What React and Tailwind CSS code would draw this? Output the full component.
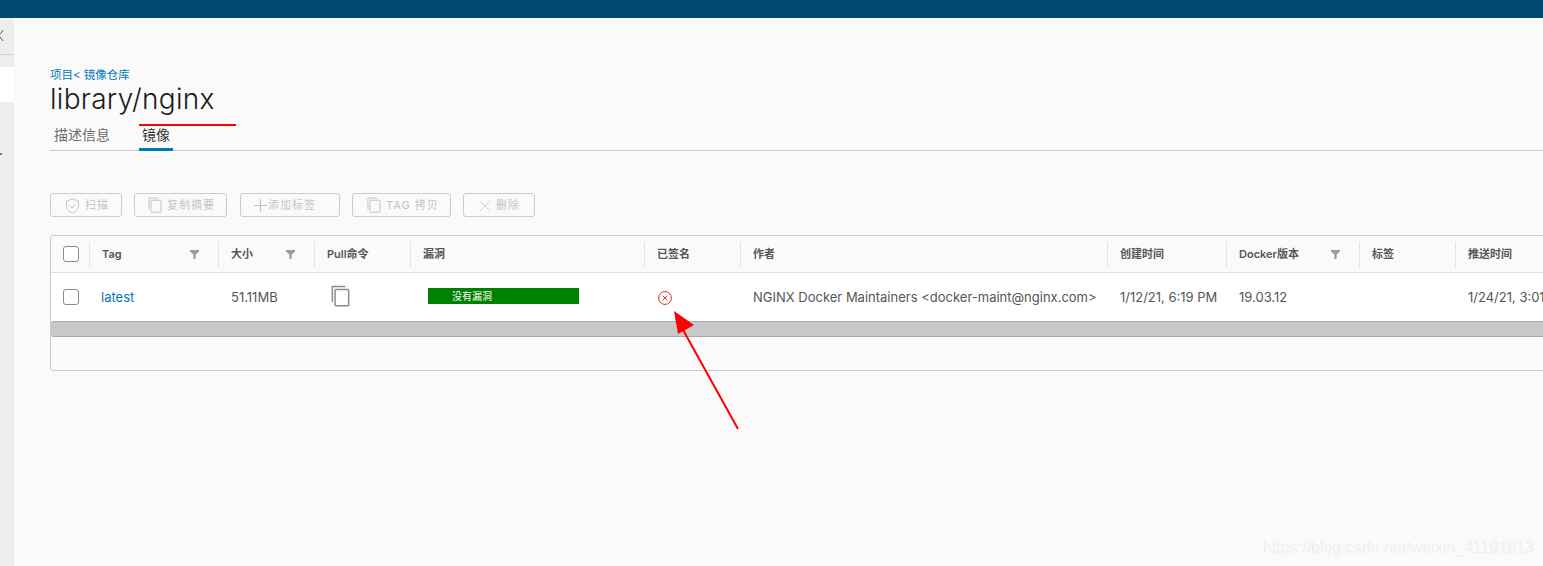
import React from 'react';
import { X } from 'lucide-react';

const FONT = "font-['Inter','Noto_Sans_CJK_SC',sans-serif]";

// shared column widths for the header and the row
const gridCols = 'grid grid-cols-[38px_129px_96px_96px_234px_96px_367px_119px_133px_96px_200px]';

const ShieldIcon = () => (
  <svg width="15" height="16" viewBox="0 0 15 16" fill="none" stroke="#c4c4c4" strokeWidth="1">
    <path d="M7.5 1 13.5 3.2v5c0 3.4-2.6 5.6-6 6.8-3.4-1.2-6-3.4-6-6.8v-5z" />
    <path d="M4.8 7.8 7 10l3.4-4" />
  </svg>
);

const CopyIcon = ({ size = 14, color = '#c4c4c4', stroke = 1 }) => (
  <svg width={size} height={size * 1.15} viewBox="0 0 14 16" fill="none" stroke={color} strokeWidth={stroke}>
    <path d="M10.5 1H1v11.5" />
    <rect x="3" y="3.2" width="10" height="12" rx="0.6" />
  </svg>
);

const PlusIcon = () => (
  <svg width="13" height="13" viewBox="0 0 13 13" stroke="#c4c4c4" strokeWidth="1.2">
    <path d="M6.5 0v13M0 6.5h13" />
  </svg>
);

const FilterIcon = () => (
  <svg width="9" height="9" viewBox="0 0 9 9" fill="#9a9a9a">
    <path d="M0 0h9v1.4L5.6 4.6V9H3.4V4.6L0 1.4z" />
  </svg>
);

const Checkbox = () => (
  <span className="block w-4 h-4 rounded-[3px] border border-[#8c8c8c] bg-white" />
);

const ActionButton = ({ icon, label, className }) => (
  <button className={`h-6 pt-px flex items-center rounded-[3px] border border-[#cccccc] text-[11px] tracking-[1px] text-[#c4c4c4] ${className}`}>
    {icon}
    <span>{label}</span>
  </button>
);

const HeaderCell = ({ label, filter }) => (
  <div className="h-[25px] my-auto pt-px flex items-center justify-between border-l border-[#e3e3e3] pl-3 pr-[19px]">
    <span className="text-[11px] font-semibold text-[#565656]">{label}</span>
    {filter && <FilterIcon />}
  </div>
);

const BodyCell = ({ children, className = 'pl-[13px] text-[#565656]' }) => (
  <div className={`pt-px flex items-center text-[13px] whitespace-nowrap ${className}`}>{children}</div>
);

const App = () => {
  return (
    <div className={`relative w-[1543px] h-[566px] overflow-hidden bg-[#fafafa] flex flex-col ${FONT}`}>
      <header className="h-[18px] shrink-0 bg-[#004a70]" />

      <div className="flex flex-1 min-h-0">
        {/* collapsed side nav, its labels are cut off by the narrow width */}
        <aside className="w-[14px] shrink-0 bg-[#ededed] flex flex-col overflow-hidden">
          <div className="h-[37px] border-b border-[#cfcfcf]">
            <svg className="mt-[11px]" width="4" height="13" viewBox="0 0 4 13" fill="none" stroke="#555" strokeWidth="1">
              <path d="M0 5 2 3M3 1 2 3M0 8l3 4" />
            </svg>
          </div>
          <div className="mt-3 h-[35px] bg-white" />
          <div className="mt-[51px] w-[2px] h-[2px] bg-[#777]" />
        </aside>

        <main className="flex-1 min-w-0 pl-9 pt-[51px]">
          <div className="text-[11.5px] leading-3 text-[#0079b8]">项目&lt; 镜像仓库</div>
          <h1 className="mt-[3px] text-[28px] leading-[30px] font-light tracking-[0.3px] text-[#1a1a1a]">library/nginx</h1>

          <nav className="mt-[6px] h-[31px] border-b border-[#cccccc] flex text-[14px]">
            <span className="pl-1 pt-[6px] leading-[18px] w-[89px] text-[#6b6b6b]">描述信息</span>
            <span className="w-[34px] h-[31px] pt-[6px] text-center leading-[18px] text-[#333] border-b-[3px] border-[#0079b8]">镜像</span>
          </nav>

          <div className="mt-[42px] flex gap-3">
            <ActionButton className="w-[72px] pl-[14px] gap-[5px]" icon={<ShieldIcon />} label="扫描" />
            <ActionButton className="w-[93px] pl-[13px] gap-[5px]" icon={<CopyIcon />} label="复制摘要" />
            <ActionButton className="w-[100px] ml-px pl-[13px] gap-[1px]" icon={<PlusIcon />} label="添加标签" />
            <ActionButton className="w-[99px] pl-[14px] gap-[5px]" icon={<CopyIcon />} label="TAG 拷贝" />
            <ActionButton className="w-[72px] pl-[11px] gap-[1px]" icon={<X size={20} strokeWidth={0.8} color="#c4c4c4" />} label="删除" />
          </div>

          {/* image table runs past the right edge of the window */}
          <section className="mt-[18px] w-[1700px] h-[136px] rounded-[3px] border border-[#cccccc]">
            <div className={`${gridCols} h-[37px] border-b border-[#dddddd]`}>
              <div className="flex items-center pl-3"><Checkbox /></div>
              <HeaderCell label="Tag" filter />
              <HeaderCell label="大小" filter />
              <HeaderCell label="Pull命令" />
              <HeaderCell label="漏洞" />
              <HeaderCell label="已签名" />
              <HeaderCell label="作者" />
              <HeaderCell label="创建时间" />
              <HeaderCell label="Docker版本" filter />
              <HeaderCell label="标签" />
              <HeaderCell label="推送时间" />
            </div>

            <div className={`${gridCols} h-[48px] bg-white`}>
              <div className="flex items-center pl-3"><Checkbox /></div>
              <BodyCell className="pl-3 text-[#0079b8]">latest</BodyCell>
              <BodyCell>51.11MB</BodyCell>
              <BodyCell className="pl-[17px]">
                <span className="mb-[3px]"><CopyIcon size={19} color="#8c8c8c" stroke={1.1} /></span>
              </BodyCell>
              <BodyCell className="pl-[18px]">
                <div className="mb-[3px] w-[151px] h-4 bg-[#008000] pl-6 text-[10px] leading-4 text-white">没有漏洞</div>
              </BodyCell>
              <BodyCell className="pl-[14px]">
                <svg width="14" height="14" viewBox="0 0 14 14" fill="none" stroke="#d8341a" strokeWidth="1">
                  <circle cx="7" cy="7" r="6.4" />
                  <path d="M4.7 4.7l4.6 4.6M9.3 4.7l-4.6 4.6" />
                </svg>
              </BodyCell>
              <BodyCell>NGINX Docker Maintainers &lt;docker-maint@nginx.com&gt;</BodyCell>
              <BodyCell>1/12/21, 6:19 PM</BodyCell>
              <BodyCell>19.03.12</BodyCell>
              <BodyCell />
              <BodyCell>1/24/21, 3:01 PM</BodyCell>
            </div>

            {/* horizontal scrollbar */}
            <div className="h-4 border-y border-[#a8a8a8] bg-[#c8c8c8] rounded-l-[3px]" />
          </section>
        </main>
      </div>

      {/* red annotation marks on top of the page */}
      <div className="absolute left-[139px] top-[124px] w-[97px] h-[2px] bg-[#ff0000]" />
      <svg className="absolute left-[670px] top-[308px]" width="72" height="124" viewBox="0 0 72 124" fill="none">
        <path d="M68 121 12 20" stroke="#ff0000" strokeWidth="2" />
        <path d="M4 3 24 17 8 26z" fill="#ff0000" />
      </svg>

      <span className="absolute right-[9px] top-[538px] font-['Liberation_Sans',sans-serif] text-[16px] leading-5 text-[#efefef]">
        https://blog.csdn.net/weixin_41191813
      </span>
    </div>
  );
};

export default App;
